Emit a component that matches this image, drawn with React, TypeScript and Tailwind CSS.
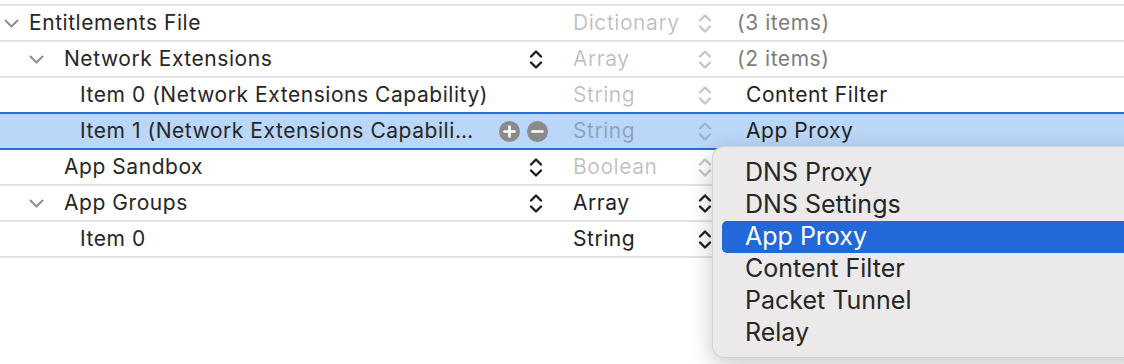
import React from "react";

const Stepper = ({ color }: { color: string }) => (
  <svg width="14" height="21" viewBox="0 0 14 21" fill="none" className="shrink-0">
    <path d="M2 7.5 L7 2.5 L12 7.5" stroke={color} strokeWidth="2.4" strokeLinecap="round" strokeLinejoin="round" />
    <path d="M2 13.5 L7 18.5 L12 13.5" stroke={color} strokeWidth="2.4" strokeLinecap="round" strokeLinejoin="round" />
  </svg>
);

const Disclosure = () => (
  <svg width="15" height="9" viewBox="0 0 15 9" fill="none" className="shrink-0">
    <path d="M1.5 1.5 L7.5 7.5 L13.5 1.5" stroke="#8e8e8e" strokeWidth="2" strokeLinecap="round" strokeLinejoin="round" />
  </svg>
);

const CircleBtn = ({ minus }: { minus?: boolean }) => (
  <svg width="21" height="21" viewBox="0 0 21 21" className="shrink-0">
    <circle cx="10.5" cy="10.5" r="10.5" fill="#8b8b8b" />
    <path d="M5.5 10.5 H15.5" stroke="#fff" strokeWidth="2.6" strokeLinecap="round" />
    {!minus && <path d="M10.5 5.5 V15.5" stroke="#fff" strokeWidth="2.6" strokeLinecap="round" />}
  </svg>
);

type RowProps = {
  keyPad: string;
  chevronW?: string;
  label: string;
  keyStepper?: boolean;
  plusMinus?: boolean;
  type: string;
  typeCls: string;
  typeStepper: string;
  value?: string;
  valueCls?: string;
  border: string;
  bg?: string;
};

const Row = (p: RowProps) => (
  <div className={`flex h-[36px] items-center border-b-2 ${p.border} ${p.bg ?? ""}`}>
    <div className={`flex h-full w-[560px] items-center ${p.keyPad} ${p.plusMinus ? "pr-[12px]" : "pr-[17px]"}`}>
      {p.chevronW && (
        <div className={`flex ${p.chevronW} items-center`}>
          <Disclosure />
        </div>
      )}
      <div className={`min-w-0 flex-1 truncate text-[#262626] ${p.plusMinus ? "mr-[20px]" : ""}`}>{p.label}</div>
      {p.keyStepper && <Stepper color="#1f1f1f" />}
      {p.plusMinus && (
        <div className="flex items-center gap-[7px]">
          <CircleBtn />
          <CircleBtn minus />
        </div>
      )}
    </div>
    <div className="flex h-full w-[165px] items-center pl-[13px] pr-[13px]">
      <div className={`flex-1 ${p.typeCls}`}>{p.type}</div>
      <Stepper color={p.typeStepper} />
    </div>
    <div className={`flex-1 ${p.valueCls ?? ""}`}>{p.value}</div>
  </div>
);

export default function App() {
  const gray = "text-black/25";
  return (
    <div className="relative h-[364px] w-[1124px] overflow-hidden bg-white text-[21px] [font-family:Inter,'Noto_Sans',sans-serif]">
      <div className="tracking-[0.55px]">
        <div className="h-[4px]" />
        <div className="h-[2px] bg-[#e2e2e2]" />
        <Row
          keyPad="pl-[4px]"
          chevronW="w-[25px]"
          label="Entitlements File"
          type="Dictionary"
          typeCls={gray}
          typeStepper="#c6c6c6"
          value="(3 items)"
          valueCls="pl-[12px] text-[#7d7d7d]"
          border="border-[#e2e2e2]"
        />
        <Row
          keyPad="pl-[29px]"
          chevronW="w-[35px]"
          label="Network Extensions"
          keyStepper
          type="Array"
          typeCls={gray}
          typeStepper="#c6c6c6"
          value="(2 items)"
          valueCls="pl-[12px] text-[#7d7d7d]"
          border="border-[#e2e2e2]"
        />
        <Row
          keyPad="pl-[80px]"
          label="Item 0 (Network Extensions Capability)"
          type="String"
          typeCls={gray}
          typeStepper="#c6c6c6"
          value="Content Filter"
          valueCls="pl-[21px] text-[#1f1f1f]"
          border="border-[#2a6dd6]"
        />
        <Row
          keyPad="pl-[80px]"
          label="Item 1 (Network Extensions Capability)"
          plusMinus
          type="String"
          typeCls={gray}
          typeStepper="#9fb3c9"
          value="App Proxy"
          valueCls="pl-[21px] text-[#1f1f1f]"
          border="border-[#2a6dd6]"
          bg="bg-[#bad6f8]"
        />
        <Row
          keyPad="pl-[64px]"
          label="App Sandbox"
          keyStepper
          type="Boolean"
          typeCls={gray}
          typeStepper="#c6c6c6"
          border="border-[#e2e2e2]"
        />
        <Row
          keyPad="pl-[29px]"
          chevronW="w-[35px]"
          label="App Groups"
          keyStepper
          type="Array"
          typeCls="text-[#1f1f1f]"
          typeStepper="#1f1f1f"
          border="border-[#e2e2e2]"
        />
        <Row
          keyPad="pl-[80px]"
          label="Item 0"
          type="String"
          typeCls="text-[#1f1f1f]"
          typeStepper="#1f1f1f"
          border="border-[#e2e2e2]"
        />
      </div>

      <div className="absolute left-[712px] top-[146px] flex w-[440px] flex-col rounded-[12px] border border-black/10 bg-[#ebe9ea] pb-[8px] pt-[10px] text-[25px] text-[#262626] shadow-[0_6px_22px_rgba(0,0,0,0.22)]">
        {["DNS Proxy", "DNS Settings", "App Proxy", "Content Filter", "Packet Tunnel", "Relay"].map((t) => (
          <div
            key={t}
            className={`ml-[9px] flex h-[32px] items-center pl-[23px] ${
              t === "App Proxy" ? "rounded-l-[5px] bg-[#2268d8] text-white" : ""
            }`}
          >
            {t}
          </div>
        ))}
      </div>
    </div>
  );
}
